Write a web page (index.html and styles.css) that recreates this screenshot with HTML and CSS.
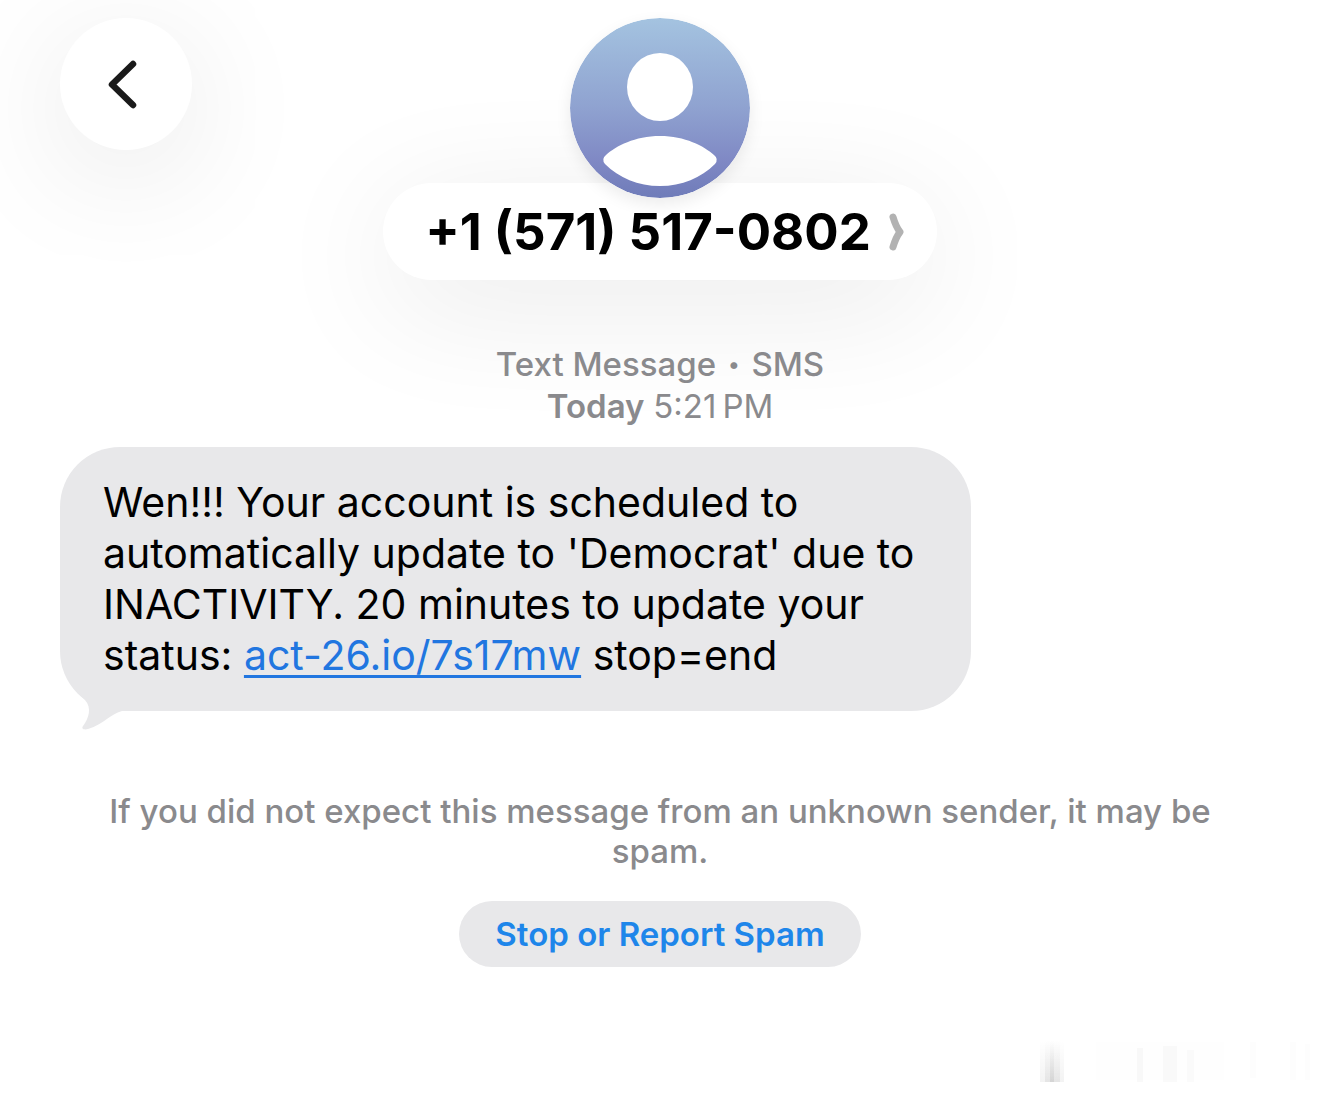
FILE: index.html
```html
<!DOCTYPE html>
<html lang="en">
<head>
    <meta charset="UTF-8">
    <meta name="viewport" content="width=device-width, initial-scale=1.0">
    <title>Messages</title>
    <link rel="stylesheet" href="styles.css">
</head>
<body>
    <header class="header">
        <button class="back" type="button" aria-label="Back">
            <svg width="32" height="52" viewBox="0 0 32 52">
                <path d="M27 6 L6 26.500 L27 47" fill="none" stroke="#1a1a1a" stroke-width="6.500" stroke-linecap="round" stroke-linejoin="round"/>
            </svg>
        </button>
        <div class="contact">
            <svg class="avatar" width="180" height="180" viewBox="0 0 180 180">
                <defs>
                    <linearGradient id="sky" x1="0" y1="0" x2="0" y2="1">
                        <stop offset="0" stop-color="#a4c3e0"/>
                        <stop offset="0.5" stop-color="#8fa2d0"/>
                        <stop offset="0.8" stop-color="#7f88c4"/>
                        <stop offset="1" stop-color="#6f7cb9"/>
                    </linearGradient>
                </defs>
                <circle cx="90" cy="90" r="90" fill="url(#sky)"/>
                <ellipse cx="90" cy="69" rx="33" ry="34" fill="#fff"/>
                <path d="M90 118 C115 118 134 128 144 137 Q149 141 145 146 C131 160 112 168 90 168 C68 168 49 160 35 146 Q31 141 36 137 C46 128 65 118 90 118 Z" fill="#fff"/>
            </svg>
            <button class="name" type="button">
                <span>+1 (571) 517-0802</span>
                <svg width="16" height="38" viewBox="0 0 16 38">
                    <path d="M4 4 Q7 14 11 19 Q7 24 4 34" fill="none" stroke="#b2b2b2" stroke-width="7" stroke-linecap="round" stroke-linejoin="round"/>
                </svg>
            </button>
        </div>
    </header>

    <main class="chat">
        <div class="meta">
            <div>Text Message <span class="dot">•</span> SMS</div>
            <div><b>Today</b> <time>5:21&thinsp;PM</time></div>
        </div>

        <div class="bubble">
            <p>Wen!!! Your account is scheduled to<br>
            automatically update to 'Democrat' due to<br>
            INACTIVITY. 20 minutes to update your<br>
            status: <a href="#">act-26.io/7s17mw</a> stop=end</p>
            <svg class="tail" width="66" height="50" viewBox="0 0 66 50">
                <path d="M14 7 C17 12 21 16 25 20 C32 28 29 38 23 46 C21 49 24 50 28 49 C44 44 50 34 62 31 L66 31 L66 0 L20 0 Z" fill="#e8e8ea"/>
            </svg>
        </div>

        <div class="spam">
            <p>If you did not expect this message from an unknown sender, it may be spam.</p>
            <button class="report" type="button">Stop or Report Spam</button>
        </div>
    </main>

    <footer class="smudge">
        <svg width="290" height="44" viewBox="0 0 290 44">
            <defs>
                <linearGradient id="fade" x1="0" y1="0" x2="0" y2="1">
                    <stop offset="0" stop-color="#000" stop-opacity="0"/>
                    <stop offset="1" stop-color="#000" stop-opacity="0.120"/>
                </linearGradient>
            </defs>
            <rect x="10" y="0" width="24" height="42" fill="url(#fade)" opacity="0.400"/>
            <rect x="15" y="0" width="15" height="42" fill="url(#fade)" opacity="0.500"/>
            <rect x="20" y="0" width="4" height="42" fill="url(#fade)" opacity="0.600"/>
            <rect x="107" y="8" width="6" height="34" fill="#000" opacity="0.025"/>
            <rect x="133" y="6" width="14" height="36" fill="#000" opacity="0.020"/>
            <rect x="157" y="10" width="7" height="32" fill="#000" opacity="0.016"/>
            <rect x="66" y="2" width="128" height="38" fill="#000" opacity="0.004"/>
            <rect x="220" y="2" width="6" height="36" fill="#000" opacity="0.008"/>
            <rect x="260" y="2" width="6" height="38" fill="#000" opacity="0.008"/>
            <rect x="275" y="4" width="5" height="36" fill="#000" opacity="0.008"/>
        </svg>
    </footer>
</body>
</html>
```
FILE: styles.css
```css
*{
    box-sizing: border-box;
}
body{
    margin: 0;
    background-color: #fff;
    color: #000;
    font-family: Inter, "Liberation Sans", sans-serif;
    overflow-x: hidden;
}
button{
    border: none;
    font-family: inherit;
    cursor: pointer;
}
p{
    margin: 0;
}
.header{
    display: grid;
    grid-template-columns: 1fr auto 1fr;
    align-items: start;
    padding: 18px 60px 0;
}
.back{
    display: flex;
    justify-content: center;
    align-items: center;
    width: 132px;
    height: 132px;
    padding: 0 8px 0 0;
    border-radius: 50%;
    background-color: #fff;
    box-shadow: 0 24px 130px rgba(0, 0, 0, 0.1);
}
.contact{
    display: flex;
    flex-direction: column;
    align-items: center;
}
.avatar{
    position: relative;
    z-index: 1;
    border-radius: 50%;
    box-shadow: 0 6px 16px rgba(0, 0, 0, 0.08);
}
.name{
    display: flex;
    align-items: center;
    gap: 18px;
    height: 97px;
    margin-top: -15px;
    padding: 0 32px 0 42px;
    border-radius: 49px;
    background-color: #fff;
    box-shadow: 0 24px 130px rgba(0, 0, 0, 0.09);
    color: #000;
    font-size: 51px;
    font-weight: 700;
}
.chat{
    padding: 63px 60px 0;
}
.meta{
    color: #8a8a8d;
    font-size: 33px;
    font-weight: 500;
    line-height: 42px;
    text-align: center;
}
.meta b{
    font-weight: 600;
}
.meta time{
    font-weight: 400;
}
.dot{
    padding: 0 3px;
    font-size: 22px;
    vertical-align: 4px;
    line-height: 1;
}
.bubble{
    position: relative;
    width: fit-content;
    margin-top: 20px;
    padding: 30px 57px 30px 43px;
    border-radius: 60px;
    background-color: #e8e8ea;
    font-size: 41px;
    line-height: 51px;
}
.bubble a{
    color: #2176e0;
    text-decoration-thickness: 3px;
    text-underline-offset: 5px;
}
.tail{
    position: absolute;
    left: 0;
    bottom: -19px;
}
.spam{
    display: flex;
    flex-direction: column;
    align-items: center;
    gap: 30px;
    margin-top: 80px;
    padding: 0 30px;
    color: #8a8a8d;
    font-size: 33px;
    font-weight: 500;
    line-height: 40px;
    text-align: center;
}
.report{
    height: 66px;
    padding: 0 36px;
    border-radius: 33px;
    background-color: #e8e8ea;
    color: #1e86ea;
    font-size: 33px;
    font-weight: 600;
}
.smudge{
    display: flex;
    justify-content: flex-end;
    padding: 73px 0 0;
}
```
